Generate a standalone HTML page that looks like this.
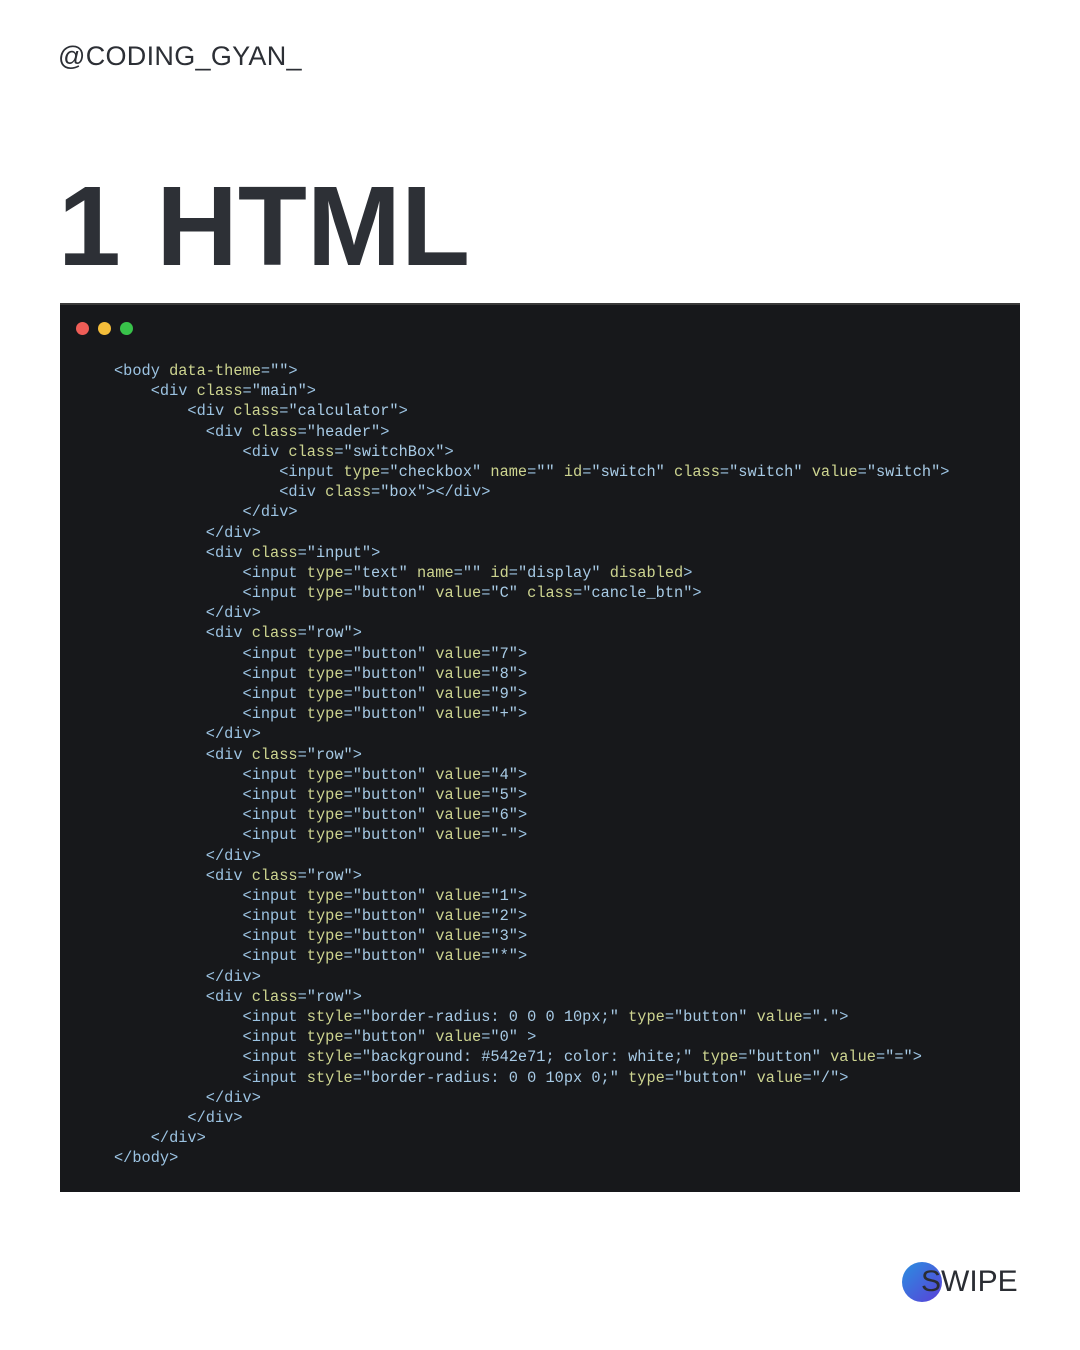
<!DOCTYPE html>
<html><head><meta charset="utf-8"><style>
html,body{margin:0;padding:0;background:#fff;width:1080px;height:1350px;overflow:hidden;position:relative;font-family:"Liberation Sans",sans-serif}
.handle{position:absolute;left:58px;top:41px;font-size:27px;color:#2c2f35;letter-spacing:0.3px}
.title{position:absolute;left:58px;top:170px;font-size:113px;font-weight:bold;color:#2d3036;letter-spacing:0px;word-spacing:4px;line-height:1}
.box{position:absolute;left:60px;top:303px;width:960px;height:887px;background:#17181b;border-top:2px solid #3a3a3a}
.dot{position:absolute;top:17px;width:13px;height:13px;border-radius:50%}
pre{position:absolute;left:54px;top:56px;margin:0;font-family:"Liberation Mono","DejaVu Sans Mono",monospace;font-size:15.3px;line-height:20.18px;color:#9cc3e2}
.a{color:#cdd490}.s{color:#a8cbe6}
.swipe{position:absolute;left:902px;top:1262px;width:40px;height:40px;border-radius:50%;background:linear-gradient(135deg,#2a8fe0,#5a3fd8)}
.sw{position:absolute;left:921px;top:1265px;font-size:30px;color:#2a2d33}
</style></head><body>
<div class="handle">@CODING_GYAN_</div>
<div class="title">1 HTML</div>
<div class="box">
<div class="dot" style="left:16px;background:#ef5d57"></div>
<div class="dot" style="left:38px;background:#f4bd3a"></div>
<div class="dot" style="left:60px;background:#38c24a"></div>
<pre>&lt;body <span class="a">data-theme</span>=<span class="s">""</span>&gt;
    &lt;div <span class="a">class</span>=<span class="s">"main"</span>&gt;
        &lt;div <span class="a">class</span>=<span class="s">"calculator"</span>&gt;
          &lt;div <span class="a">class</span>=<span class="s">"header"</span>&gt;
              &lt;div <span class="a">class</span>=<span class="s">"switchBox"</span>&gt;
                  &lt;input <span class="a">type</span>=<span class="s">"checkbox"</span> <span class="a">name</span>=<span class="s">""</span> <span class="a">id</span>=<span class="s">"switch"</span> <span class="a">class</span>=<span class="s">"switch"</span> <span class="a">value</span>=<span class="s">"switch"</span>&gt;
                  &lt;div <span class="a">class</span>=<span class="s">"box"</span>&gt;&lt;/div&gt;
              &lt;/div&gt;
          &lt;/div&gt;
          &lt;div <span class="a">class</span>=<span class="s">"input"</span>&gt;
              &lt;input <span class="a">type</span>=<span class="s">"text"</span> <span class="a">name</span>=<span class="s">""</span> <span class="a">id</span>=<span class="s">"display"</span> <span class="a">disabled</span>&gt;
              &lt;input <span class="a">type</span>=<span class="s">"button"</span> <span class="a">value</span>=<span class="s">"C"</span> <span class="a">class</span>=<span class="s">"cancle_btn"</span>&gt;
          &lt;/div&gt;
          &lt;div <span class="a">class</span>=<span class="s">"row"</span>&gt;
              &lt;input <span class="a">type</span>=<span class="s">"button"</span> <span class="a">value</span>=<span class="s">"7"</span>&gt;
              &lt;input <span class="a">type</span>=<span class="s">"button"</span> <span class="a">value</span>=<span class="s">"8"</span>&gt;
              &lt;input <span class="a">type</span>=<span class="s">"button"</span> <span class="a">value</span>=<span class="s">"9"</span>&gt;
              &lt;input <span class="a">type</span>=<span class="s">"button"</span> <span class="a">value</span>=<span class="s">"+"</span>&gt;
          &lt;/div&gt;
          &lt;div <span class="a">class</span>=<span class="s">"row"</span>&gt;
              &lt;input <span class="a">type</span>=<span class="s">"button"</span> <span class="a">value</span>=<span class="s">"4"</span>&gt;
              &lt;input <span class="a">type</span>=<span class="s">"button"</span> <span class="a">value</span>=<span class="s">"5"</span>&gt;
              &lt;input <span class="a">type</span>=<span class="s">"button"</span> <span class="a">value</span>=<span class="s">"6"</span>&gt;
              &lt;input <span class="a">type</span>=<span class="s">"button"</span> <span class="a">value</span>=<span class="s">"-"</span>&gt;
          &lt;/div&gt;
          &lt;div <span class="a">class</span>=<span class="s">"row"</span>&gt;
              &lt;input <span class="a">type</span>=<span class="s">"button"</span> <span class="a">value</span>=<span class="s">"1"</span>&gt;
              &lt;input <span class="a">type</span>=<span class="s">"button"</span> <span class="a">value</span>=<span class="s">"2"</span>&gt;
              &lt;input <span class="a">type</span>=<span class="s">"button"</span> <span class="a">value</span>=<span class="s">"3"</span>&gt;
              &lt;input <span class="a">type</span>=<span class="s">"button"</span> <span class="a">value</span>=<span class="s">"*"</span>&gt;
          &lt;/div&gt;
          &lt;div <span class="a">class</span>=<span class="s">"row"</span>&gt;
              &lt;input <span class="a">style</span>=<span class="s">"border-radius: 0 0 0 10px;"</span> <span class="a">type</span>=<span class="s">"button"</span> <span class="a">value</span>=<span class="s">"."</span>&gt;
              &lt;input <span class="a">type</span>=<span class="s">"button"</span> <span class="a">value</span>=<span class="s">"0"</span> &gt;
              &lt;input <span class="a">style</span>=<span class="s">"background: #542e71; color: white;"</span> <span class="a">type</span>=<span class="s">"button"</span> <span class="a">value</span>=<span class="s">"="</span>&gt;
              &lt;input <span class="a">style</span>=<span class="s">"border-radius: 0 0 10px 0;"</span> <span class="a">type</span>=<span class="s">"button"</span> <span class="a">value</span>=<span class="s">"/"</span>&gt;
          &lt;/div&gt;
        &lt;/div&gt;
    &lt;/div&gt;
&lt;/body&gt;</pre>
</div>
<div class="swipe"></div>
<div class="sw">SWIPE</div>
</body></html>
